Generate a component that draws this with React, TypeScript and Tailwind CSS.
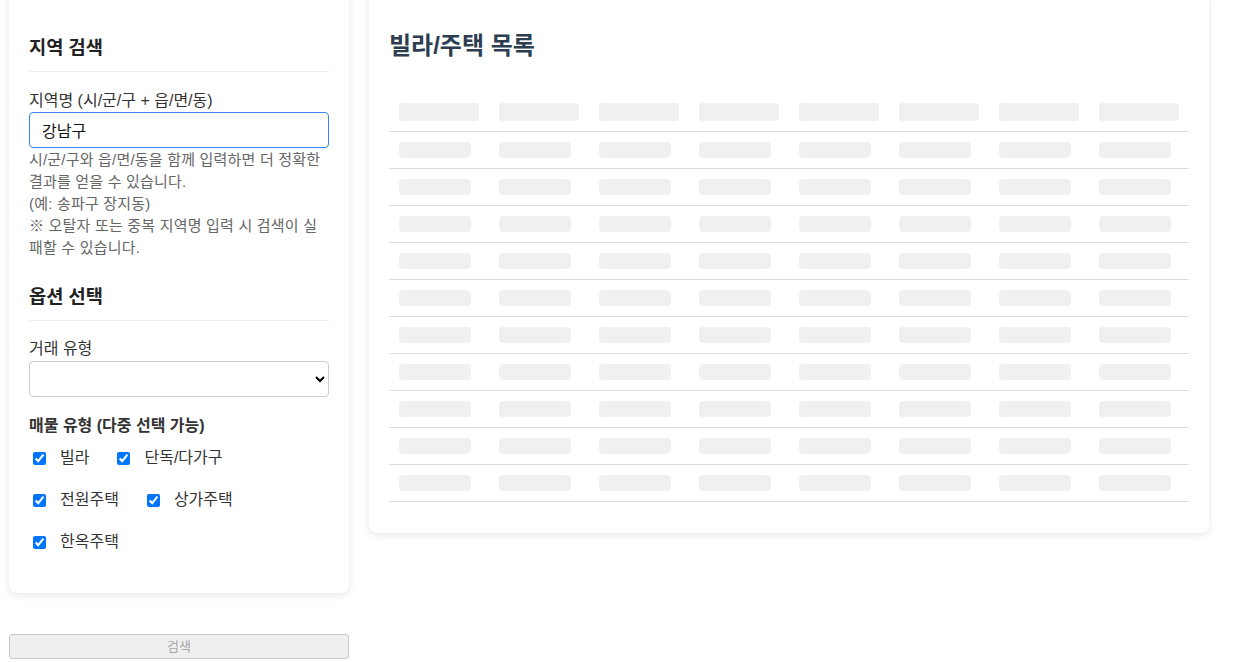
import React from 'react';

const propertyTypes = ['빌라', '단독/다가구', '전원주택', '상가주택', '한옥주택'];

function SkeletonTable() {
  const cols = Array.from({ length: 8 });
  const rows = Array.from({ length: 10 });
  return (
    <table className="w-full border-collapse table-fixed">
      <thead>
        <tr className="border-b border-[#ddd]">
          {cols.map((_, i) => (
            <th key={i} className="p-[10px] text-left">
              <div className="h-[18px] w-[80px] rounded bg-[#f0f0f0]" />
            </th>
          ))}
        </tr>
      </thead>
      <tbody>
        {rows.map((_, r) => (
          <tr key={r} className="border-b border-[#ddd]">
            {cols.map((_, i) => (
              <td key={i} className="p-[10px]">
                <div className="h-[16px] w-[72px] rounded bg-[#f0f0f0]" />
              </td>
            ))}
          </tr>
        ))}
      </tbody>
    </table>
  );
}

export default function App() {
  return (
    <div
      className="min-h-screen bg-white overflow-hidden"
      style={{ fontFamily: '"Liberation Sans", "Noto Sans CJK KR", sans-serif' }}
    >
      <div className="-mt-[10px] ml-[9px] flex items-start gap-5">
        {/* sidebar */}
        <div className="w-[340px] shrink-0">
          <div className="rounded-lg bg-white px-5 pt-[44px] pb-[40px] shadow-[0_2px_8px_rgba(0,0,0,0.1)]">
            <h3 className="border-b border-[#eee] pb-[10px] text-[18.72px] font-bold leading-[27px] text-[#222]">
              지역 검색
            </h3>
            <label className="mt-[18px] block text-[16px] leading-[22px] text-[#333]">
              지역명 (시/군/구 + 읍/면/동)
            </label>
            <input
              type="text"
              defaultValue="강남구"
              className="block h-[36px] w-full rounded border border-[#3b82f6] px-3 text-[16px] text-[#111] outline-none"
            />
            <p className="mt-px text-[15px] leading-[22px] tracking-[0.2px] text-[#666]">
              시/군/구와 읍/면/동을 함께 입력하면 더 정확한 결과를 얻을 수 있습니다.
              <br />
              (예: 송파구 장지동)
              <br />※ 오탈자 또는 중복 지역명 입력 시 검색이 실패할 수 있습니다.
            </p>

            <h3 className="mt-[24px] border-b border-[#eee] pb-[10px] text-[18.72px] font-bold leading-[27px] text-[#222]">
              옵션 선택
            </h3>
            <label className="mt-[17px] block text-[16px] leading-[22px] text-[#333]">거래 유형</label>
            <select className="mt-px block h-[36px] w-full rounded border border-[#ccc] px-2 text-[16px]">
              <option value=""></option>
            </select>

            <div className="mt-[18px] text-[16px] font-semibold leading-[22px] text-[#333]">
              매물 유형 (다중 선택 가능)
            </div>
            <div className="mt-[10px] flex flex-wrap gap-x-[24px] gap-y-[20px]">
              {propertyTypes.map((t) => (
                <label key={t} className="flex h-[22px] items-center text-[16px] text-[#333]">
                  <input type="checkbox" defaultChecked className="ml-1 mr-[14px] h-[13px] w-[13px]" />
                  {t}
                </label>
              ))}
            </div>
          </div>

          <button
            disabled
            className="mt-[41px] block h-[25px] w-full rounded-[3px] border border-[#c8c8c8] bg-[#efefef] text-[13px] text-[#a8a8a8]"
          >
            검색
          </button>
        </div>

        {/* main list */}
        <div className="w-[840px] shrink-0 rounded-lg bg-white px-5 pt-[39px] pb-[31px] shadow-[0_2px_8px_rgba(0,0,0,0.1)]">
          <h2 className="mb-[31px] text-[24px] font-bold leading-[33px] text-[#2c3e50]">빌라/주택 목록</h2>
          <SkeletonTable />
        </div>
      </div>
    </div>
  );
}
